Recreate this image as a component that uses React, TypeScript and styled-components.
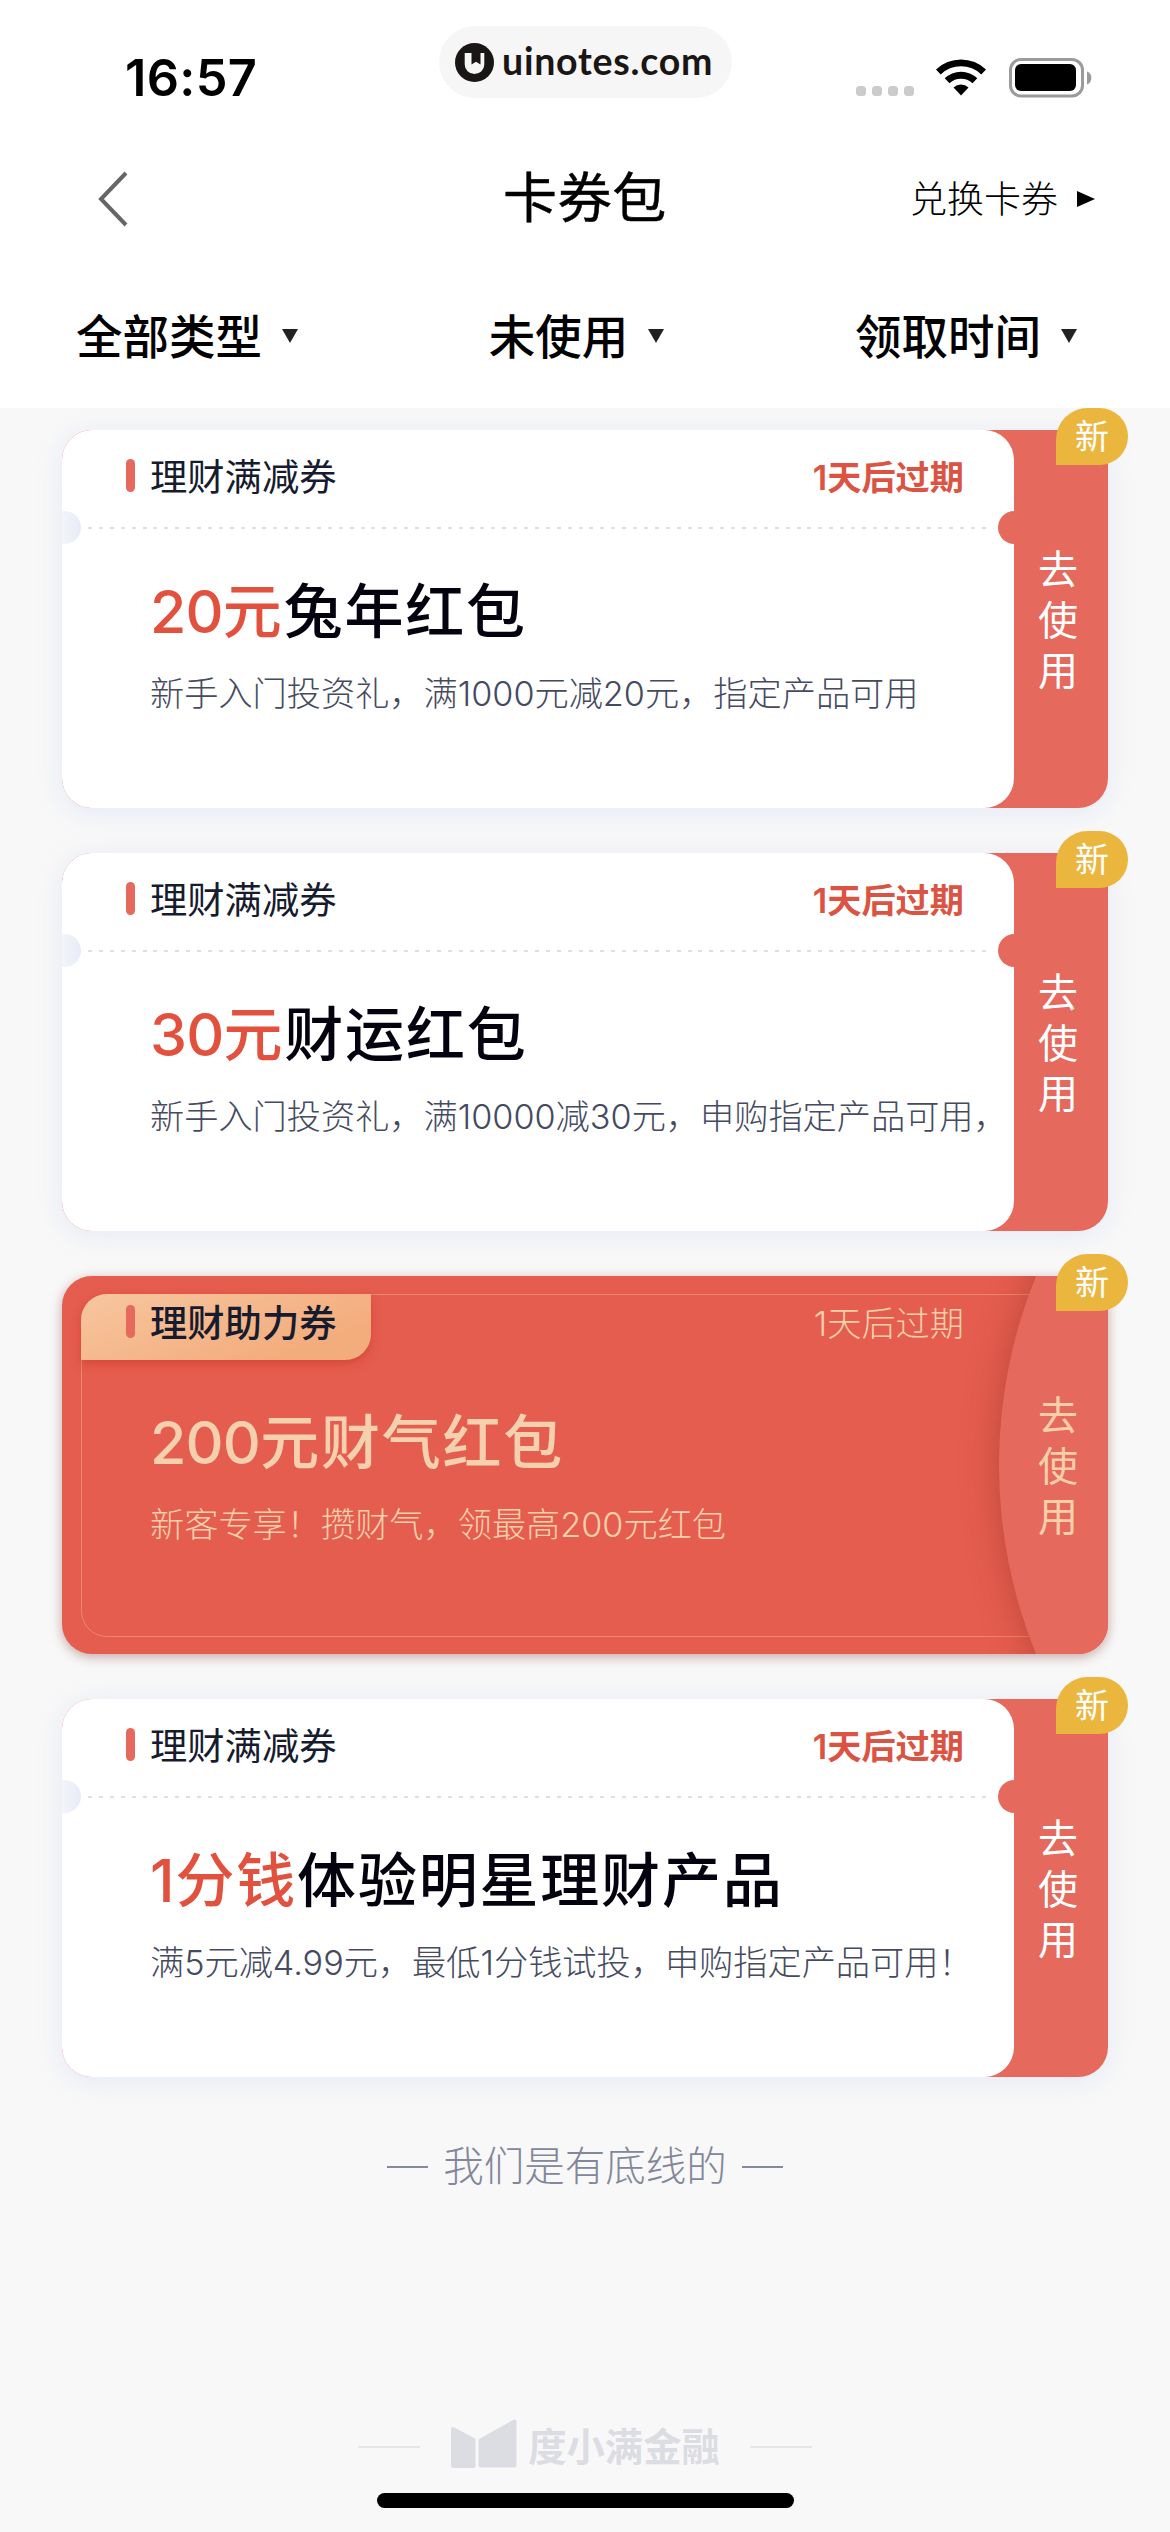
import React from "react";
import styled, { createGlobalStyle, css } from "styled-components";

const GlobalStyle = createGlobalStyle`
  * { box-sizing: border-box; }
  body { margin: 0; background: #f8f8f8; }
`;

const Page = styled.div`
  width: 1170px;
  height: 2532px;
  display: flex;
  flex-direction: column;
  background: #f8f8f8;
  font-family: Inter, "Noto Sans CJK SC", sans-serif;
  color: #000;
  overflow: hidden;
  white-space: nowrap;
`;

const Header = styled.header`
  height: 408px;
  background: #fff;
  display: flex;
  flex-direction: column;
`;

const StatusBar = styled.div`
  height: 130px;
  display: grid;
  grid-template-columns: 439px 293px 1fr;
`;

const Clock = styled.div`
  padding: 48px 0 0 125px;
  font-size: 50.5px;
  line-height: 60px;
  font-weight: 600;
  letter-spacing: 0.3px;
`;

const SitePill = styled.div`
  margin-top: 26px;
  height: 72px;
  border-radius: 36px;
  background: #f6f6f6;
  display: flex;
  align-items: center;
  padding-left: 16px;
  gap: 8px;
  font-family: Lato, sans-serif;
  font-weight: 700;
  font-size: 37.5px;
  letter-spacing: 0.75px;
  color: #191615;
`;

const SiteName = styled.span`
  padding-bottom: 4px;
`;

const StatusIcons = styled.div`
  display: flex;
  padding: 58px 0 0 124px;
  align-items: flex-start;
`;

const Signal = styled.div`
  display: flex;
  gap: 6px;
  padding-top: 28px;
  width: 80px;
`;

const Dot = styled.span`
  width: 10px;
  height: 10px;
  border-radius: 3.5px;
  background: #cbcbcb;
`;

const NavBar = styled.nav`
  height: 138px;
  display: grid;
  grid-template-columns: 1fr auto 1fr;
  align-items: center;
`;

const BackIcon = styled.svg`
  margin-left: 96px;
`;

const PageTitle = styled.h1`
  margin: 0;
  font-size: 54px;
  font-weight: 400;
  line-height: 80px;
  letter-spacing: 0.6px;
  -webkit-text-stroke: 0.5px currentColor;
`;

const Redeem = styled.a`
  display: flex;
  align-items: center;
  justify-content: flex-end;
  gap: 19px;
  padding-right: 75px;
  font-size: 37px;
  font-weight: 300;
`;

const RedeemLabel = styled.span`
  padding-bottom: 4px;
`;

const Filters = styled.div`
  height: 136px;
  display: flex;
  justify-content: space-between;
  padding: 0 93px 0 76px;
`;

const Filter = styled.button`
  display: flex;
  align-items: center;
  gap: 20px;
  border: 0;
  padding: 0;
  background: none;
  font: inherit;
  color: inherit;
  font-size: 46.5px;
  font-weight: 500;
`;

const FilterLabel = styled.span`
  padding-bottom: 6px;
`;

const List = styled.main`
  padding: 22px 62px 0;
  display: flex;
  flex-direction: column;
  gap: 45px;
`;

type Tone = { $boost?: boolean };

const Card = styled.article<Tone>`
  position: relative;
  height: 378px;
  display: grid;
  grid-template-columns: 952px 94px;
  border-radius: 30px;
  background: ${(p) => (p.$boost ? "#e55d4f" : "#e5695d")};
  box-shadow: ${(p) =>
    p.$boost ? "0 3px 12px rgba(120, 50, 40, 0.4)" : "0 4px 26px rgba(206, 216, 245, 0.45)"};
`;

const Panel = styled.div<Tone>`
  position: relative;
  display: flex;
  flex-direction: column;
  border-radius: 30px;
  overflow: hidden;
  ${(p) =>
    !p.$boost &&
    css`
      background: #fff;
    `}
`;

const Notch = styled.span<{ $side: "left" | "right" }>`
  position: absolute;
  top: 81px;
  width: 33px;
  height: 33px;
  border-radius: 50%;
  ${(p) =>
    p.$side === "left"
      ? css`
          left: -14px;
          background: linear-gradient(90deg, #f3f5fa 40%, #e8ebf7);
        `
      : css`
          right: -17px;
          background: #e5695d;
        `}
`;

const CardHead = styled.div`
  position: relative;
  height: 97px;
  display: flex;
  align-items: flex-start;
  justify-content: space-between;
  padding: 21px 50px 0 64px;
`;

const Kind = styled.div<Tone>`
  display: flex;
  align-items: center;
  gap: 15px;
  height: 54px;
  font-size: 37.3px;
  line-height: 54px;
  font-weight: ${(p) => (p.$boost ? 500 : 400)};
  color: #161b2e;
`;

const Bar = styled.i`
  width: 9px;
  height: 33px;
  margin-bottom: 5px;
  border-radius: 5px;
  background: #e5695d;
`;

const Expiry = styled.div<Tone>`
  font-size: 34.2px;
  line-height: 54px;
  font-weight: ${(p) => (p.$boost ? 300 : 600)};
  color: ${(p) => (p.$boost ? "#f6cfab" : "#db5342")};
`;

const DottedLine = styled.span`
  height: 2px;
  margin: 0 24px 0 26px;
  background: repeating-linear-gradient(90deg, #dcdfe4 0 4px, transparent 4px 10.9px);
`;

const Body = styled.div<Tone>`
  position: relative;
  padding: ${(p) => (p.$boost ? "26px" : "39px")} 0 0 88px;
`;

const Title = styled.h2<Tone>`
  margin: 0;
  font-size: 59px;
  line-height: 88px;
  font-weight: 500;
  letter-spacing: 1.8px;
  color: ${(p) => (p.$boost ? "#f4d0ae" : "#04020f")};
`;

const Amount = styled.span<Tone>`
  color: ${(p) => (p.$boost ? "inherit" : "#e2513e")};
`;

const Digits = styled.span<{ $tight: boolean }>`
  letter-spacing: ${(p) => (p.$tight ? "-0.8px" : "1px")};
`;

const Desc = styled.p<Tone>`
  margin: 13px 0 0;
  font-size: 34.2px;
  line-height: 50px;
  font-weight: 300;
  color: ${(p) => (p.$boost ? "#f6cfab" : "#454a5f")};
`;

const UseButton = styled.div<Tone>`
  position: relative;
  display: flex;
  flex-direction: column;
  align-items: center;
  padding: 115px 6px 0 0;
  font-size: 40px;
  line-height: 50.7px;
  font-weight: 400;
  color: ${(p) => (p.$boost ? "#f9cfaa" : "#fff")};
`;

const NewBadge = styled.span`
  position: absolute;
  top: -22px;
  right: -20px;
  width: 72px;
  height: 57px;
  border-radius: 32px 29px 29px 0;
  background: #ebb63e;
  color: #fff;
  font-size: 34px;
  line-height: 57px;
  text-align: center;
`;

const ArcClip = styled.div`
  position: absolute;
  inset: 0;
  border-radius: 30px;
  overflow: hidden;
`;

const Arc = styled.div`
  position: absolute;
  left: 937px;
  top: -312px;
  width: 1002px;
  height: 1002px;
  border-radius: 50%;
  background: #e5695d;
  box-shadow: 0 0 34px rgba(150, 50, 35, 0.5);
`;

const InnerFrame = styled.div`
  position: absolute;
  inset: 18px 18px 17px 19px;
  border: 1px solid rgba(246, 200, 150, 0.4);
  border-radius: 26px;
`;

const KindTab = styled.div`
  position: absolute;
  left: 19px;
  top: 18px;
  width: 290px;
  height: 66px;
  border-radius: 26px 0 26px 0;
  background: linear-gradient(160deg, #f7c6a0, #f3ac7c 80%);
  box-shadow: 0 4px 10px rgba(200, 50, 35, 0.5);
`;

const ListEnd = styled.div`
  margin-top: 65px;
  height: 50px;
  display: flex;
  align-items: center;
  justify-content: center;
  gap: 15px;
  font-size: 40.5px;
  line-height: 50px;
  font-weight: 300;
  color: #82879a;
`;

const Dash = styled.i`
  width: 41px;
  height: 2px;
  background: #858a9b;
`;

const Brand = styled.footer`
  margin-top: auto;
  height: 52px;
  display: flex;
  align-items: center;
  justify-content: center;
  color: #dcdde3;
  font-size: 38.3px;
  line-height: 52px;
  font-weight: 700;
`;

const BrandIcon = styled.svg`
  margin: 0 0 6px 31px;
`;

const BrandName = styled.span`
  margin: 0 30px 0 11px;
`;

const BrandLine = styled.i`
  width: 62px;
  height: 2px;
  background: #e5e6e9;
`;

const HomeIndicator = styled.div`
  width: 417px;
  height: 15px;
  margin: 20px auto 24px;
  border-radius: 8px;
  background: #000;
`;

const Triangle = ({ right = false }: { right?: boolean }) =>
  right ? (
    <svg width="18" height="16" viewBox="0 0 18 16">
      <path d="M0 0 18 8 0 16Z" fill="#000" />
    </svg>
  ) : (
    <svg width="16" height="14" viewBox="0 0 16 14">
      <path d="M0 0H16L8 14Z" fill="#222" />
    </svg>
  );

const SiteMark = () => (
  <svg width="39" height="39" viewBox="0 0 39 39">
    <circle cx="19.5" cy="19.5" r="19.5" fill="#191615" />
    <path d="M9.700 10h19.600v11.500a9.800 9.500 0 0 1-19.600 0Z" fill="#f6f6f6" />
    <path d="M16.500 9.500h9V21.500l-4.500-2.700-4.500 2.700Z" fill="#191615" />
  </svg>
);

const Wifi = () => (
  <svg width="50" height="38" viewBox="0 0 50 38">
    <path d="M0 11.500a36 36 0 0 1 50 0l-4.700 5a29 29 0 0 0-40.600 0Z" />
    <path d="M8.700 20.300a23.500 23.500 0 0 1 32.600 0l-4.800 5a17 17 0 0 0-23 0Z" />
    <path d="M17.500 29.500a11 11 0 0 1 15 0L25 37.500Z" />
  </svg>
);

const BatteryIcon = styled.svg`
  margin-left: 23px;
`;

const Battery = () => (
  <BatteryIcon width="84" height="40" viewBox="0 0 84 40">
    <rect x="1.500" y="1.500" width="72" height="36.500" rx="10.500" fill="none" stroke="#9b9b9b" strokeWidth="3" />
    <rect x="6" y="6" width="61" height="27" rx="6" />
    <path d="M78 13.500a7 7 0 0 1 0 13Z" fill="#9b9b9b" />
  </BatteryIcon>
);

const BrandMark = () => (
  <BrandIcon width="66" height="50" viewBox="0 0 66 50">
    <g fill="currentColor" stroke="currentColor" strokeWidth="4" strokeLinejoin="round">
      <path d="M2 10 22.500 21V47H2Z" />
      <path d="M29.500 21.500 63.500 2.500V46.500H29.500Z" />
    </g>
  </BrandIcon>
);

type Coupon = {
  kind: string;
  value: string;
  unit: string;
  name: string;
  desc: string;
  boost?: boolean;
};

const coupons: Coupon[] = [
  { kind: "理财满减券", value: "20", unit: "元", name: "兔年红包", desc: "新手入门投资礼，满1000元减20元，指定产品可用" },
  { kind: "理财满减券", value: "30", unit: "元", name: "财运红包", desc: "新手入门投资礼，满10000减30元，申购指定产品可用，" },
  { kind: "理财助力券", value: "200", unit: "元", name: "财气红包", desc: "新客专享！攒财气，领最高200元红包", boost: true },
  { kind: "理财满减券", value: "1", unit: "分钱", name: "体验明星理财产品", desc: "满5元减4.99元，最低1分钱试投，申购指定产品可用！" },
];

const CouponCard = ({ kind, value, unit, name, desc, boost }: Coupon) => (
  <Card $boost={boost}>
    {boost && (
      <ArcClip>
        <InnerFrame />
        <Arc />
        <KindTab />
      </ArcClip>
    )}
    <Panel $boost={boost}>
      <CardHead>
        <Kind $boost={boost}>
          <Bar />
          {kind}
        </Kind>
        <Expiry $boost={boost}>1天后过期</Expiry>
      </CardHead>
      {!boost && <DottedLine />}
      {!boost && <Notch $side="left" />}
      {!boost && <Notch $side="right" />}
      <Body $boost={boost}>
        <Title $boost={boost}>
          <Amount $boost={boost}>
            <Digits $tight={value.length > 1}>{value}</Digits>
            {unit}
          </Amount>
          {name}
        </Title>
        <Desc $boost={boost}>{desc}</Desc>
      </Body>
    </Panel>
    <UseButton $boost={boost}>
      {[..."去使用"].map((c) => (
        <span key={c}>{c}</span>
      ))}
    </UseButton>
    <NewBadge>新</NewBadge>
  </Card>
);

export default function App() {
  return (
    <Page>
      <GlobalStyle />
      <Header>
        <StatusBar>
          <Clock>16:57</Clock>
          <SitePill>
            <SiteMark />
            <SiteName>uinotes.com</SiteName>
          </SitePill>
          <StatusIcons>
            <Signal>
              <Dot />
              <Dot />
              <Dot />
              <Dot />
            </Signal>
            <Wifi />
            <Battery />
          </StatusIcons>
        </StatusBar>
        <NavBar>
          <BackIcon width="34" height="56" viewBox="0 0 34 56" fill="none" stroke="#666" strokeWidth="4">
            <path d="M30 2 5 28 30 54" />
          </BackIcon>
          <PageTitle>卡券包</PageTitle>
          <Redeem>
            <RedeemLabel>兑换卡券</RedeemLabel>
            <Triangle right />
          </Redeem>
        </NavBar>
        <Filters>
          {["全部类型", "未使用", "领取时间"].map((label) => (
            <Filter key={label}>
              <FilterLabel>{label}</FilterLabel>
              <Triangle />
            </Filter>
          ))}
        </Filters>
      </Header>
      <List>
        {coupons.map((c) => (
          <CouponCard key={c.name} {...c} />
        ))}
      </List>
      <ListEnd>
        <Dash />
        我们是有底线的
        <Dash />
      </ListEnd>
      <Brand>
        <BrandLine />
        <BrandMark />
        <BrandName>度小满金融</BrandName>
        <BrandLine />
      </Brand>
      <HomeIndicator />
    </Page>
  );
}
